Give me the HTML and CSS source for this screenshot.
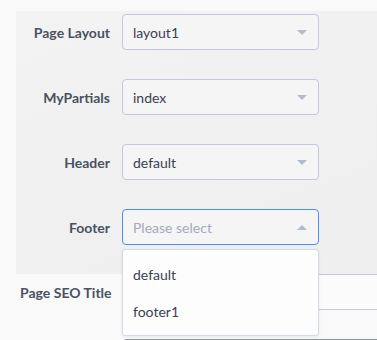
FILE: index.html
```html
<!DOCTYPE html>
<html>
<head>
<meta charset="utf-8">
<link rel="stylesheet" href="styles.css">
</head>
<body>
<div class="panel">
  <div class="row">
    <label class="label">Page Layout</label>
    <div class="select"><span class="value">layout1</span><span class="arrow down"></span></div>
  </div>
  <div class="row">
    <label class="label">MyPartials</label>
    <div class="select"><span class="value">index</span><span class="arrow down"></span></div>
  </div>
  <div class="row">
    <label class="label">Header</label>
    <div class="select"><span class="value">default</span><span class="arrow down"></span></div>
  </div>
  <div class="row">
    <label class="label">Footer</label>
    <div class="select-wrap">
      <div class="select focused"><span class="value placeholder">Please select</span><span class="arrow up"></span></div>
      <ul class="menu">
        <li class="option">default</li>
        <li class="option">footer1</li>
      </ul>
    </div>
  </div>
</div>
<div class="below">
  <div class="row2">
    <label class="label2">Page SEO Title</label>
    <div class="input"></div>
  </div>
  <div class="row2">
    <span></span>
    <div class="input dark"></div>
  </div>
</div>
</body>
</html>
```
FILE: styles.css
```css
html, body {
  margin: 0;
  padding: 0;
}
body {
  width: 377px;
  height: 340px;
  overflow: hidden;
  background: #f9f9f9;
  font-family: Lato, "Open Sans", sans-serif;
  display: flex;
  flex-direction: column;
}
.panel {
  margin: 11px 0 0 16px;
  padding: 3px 0 29px 0;
  background: linear-gradient(160deg, #f3f3f3 0%, #f0f0f0 50%, #efefef 100%);
  display: flex;
  flex-direction: column;
  gap: 29px;
  position: relative;
  z-index: 2;
}
.row {
  display: grid;
  grid-template-columns: 94px 197px;
  column-gap: 12px;
  align-items: center;
}
.label {
  text-align: right;
  font-weight: 700;
  font-size: 14px;
  color: #4a5263;
}
.select-wrap {
  position: relative;
}
.select {
  box-sizing: border-box;
  height: 36px;
  border: 1px solid #c1c9da;
  border-radius: 4px;
  background: #f5f5f5;
  display: flex;
  align-items: center;
  justify-content: space-between;
  padding: 0 11px 0 10px;
}
.select.focused {
  border-color: #4a8ff7;
}
.value {
  font-size: 14px;
  color: #3b4150;
}
.placeholder {
  color: #a3aaba;
}
.arrow {
  width: 0;
  height: 0;
  border-left: 5px solid transparent;
  border-right: 5px solid transparent;
}
.arrow.down {
  border-top: 5px solid #b3bccb;
}
.arrow.up {
  border-bottom: 5px solid #b3bccb;
}
.menu {
  position: absolute;
  top: 40px;
  left: 0;
  width: 197px;
  box-sizing: border-box;
  margin: 0;
  padding: 6px 0 5px 0;
  list-style: none;
  background: #fdfdfd;
  border: 1px solid #d5dbe5;
  border-radius: 3px;
  box-shadow: 0 1px 3px rgba(0, 0, 0, 0.08);
  z-index: 10;
}
.option {
  height: 37px;
  line-height: 37px;
  padding: 0 10px;
  font-size: 14px;
  color: #3b4150;
}
.below {
  flex: 1;
  min-height: 0;
  overflow: hidden;
  display: flex;
  flex-direction: column;
  gap: 29px;
}
.row2 {
  display: grid;
  grid-template-columns: 103px 1fr;
  align-items: center;
  padding-left: 20px;
  flex-shrink: 0;
}
.label2 {
  font-weight: 700;
  font-size: 14px;
  color: #4a5263;
}
.input {
  box-sizing: border-box;
  height: 36px;
  border: 1px solid #c1c9da;
  border-right: none;
  border-radius: 4px 0 0 4px;
  background: #fbfbfb;
}
.input.dark {
  border-color: #8d929c;
}
```
